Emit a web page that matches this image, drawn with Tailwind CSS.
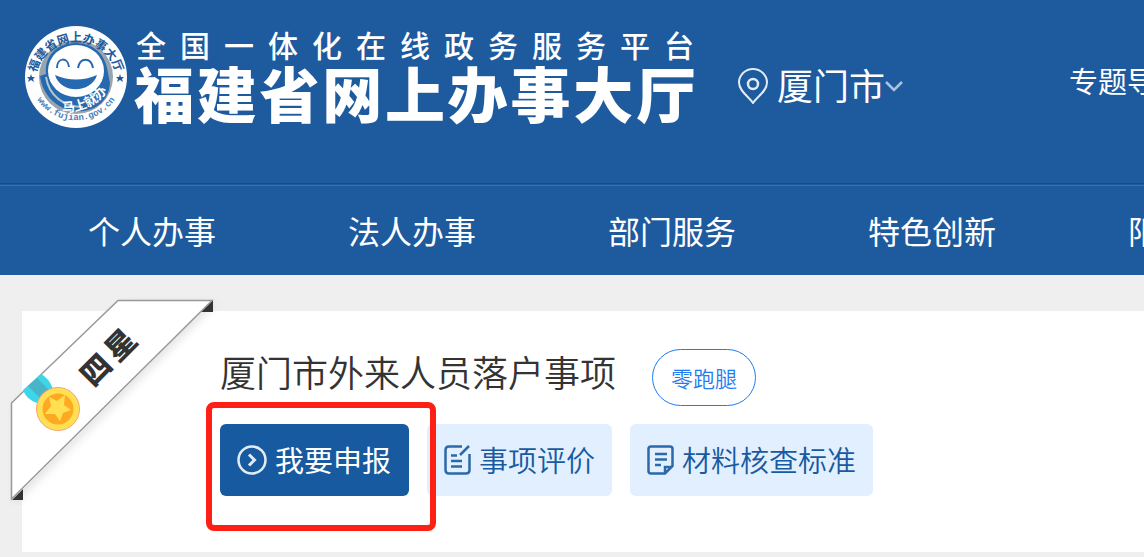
<!DOCTYPE html>
<html lang="zh-CN">
<head>
<meta charset="utf-8">
<meta name="viewport" content="width=device-width, initial-scale=1">
<title>福建省网上办事大厅</title>
<script src="https://cdn.jsdelivr.net/npm/@tailwindcss/browser@4"></script>
</head>
<body class="min-h-screen overflow-x-hidden bg-[#efefef] font-['Noto_Sans_CJK_SC','Liberation_Sans',sans-serif]">
<header class="overflow-hidden bg-[#1e5a9e] text-white">
  <div class="flex h-[183px] items-start pl-6">
    <a href="#" class="flex shrink-0 items-start gap-1.5 pt-6" aria-label="福建省网上办事大厅">
      <svg class="mt-px size-[104px]" viewBox="0 0 104 104">
        <defs>
          <path id="arcTop" d="M11 58A41 41 0 1 1 93 58"/>
          <path id="arcBottom" d="M6 58A47 47 0 0 0 98 58"/>
          <path id="arcInner" d="M38 87Q68 88 85 64"/>
        </defs>
        <circle cx="52" cy="52" r="51" fill="#fff"/>
        <circle cx="52" cy="52" r="37" fill="#98a5ae"/>
        <path d="M16 51C19 73 37 88 59 86C75 84 85 73 86 58L84 48C82 30 70 18 52 18C30 18 20 34 22 49Z" fill="#2569b0"/>
        <path d="M22 52C25 71 40 82 59 82" fill="none" stroke="#b6c4ce" stroke-width="2"/>
        <ellipse cx="52" cy="46" rx="28" ry="26" fill="#fff"/>
        <path d="M33 43C33 32 44 32 45 42M54 43C56 32 67 32 69 43" fill="none" stroke="#2569b0" stroke-width="2"/>
        <path d="M31 50Q52 59 73 50C68 68 37 70 31 50Z" fill="#2569b0"/>
        <path d="M7 49l1 3h3l-2 2 1 3-3-2-3 2 1-3-2-2h3zM96 49l1 3h3l-2 2 1 3-3-2-3 2 1-3-2-2h3z" fill="#1e5a9e"/>
        <text fill="#1e5a9e" font-size="12" font-weight="700"><textPath href="#arcTop" startOffset="50%" text-anchor="middle">福建省网上办事大厅</textPath></text>
        <text fill="#4a7db5" font-size="9" font-weight="700" font-family="Liberation Mono"><textPath href="#arcBottom" startOffset="50%" text-anchor="middle">www.fujian.gov.cn</textPath></text>
        <text fill="#fff" font-size="13" font-weight="700"><textPath href="#arcInner">马上就办</textPath></text>
      </svg>
      <span class="flex w-[562px] flex-col">
        <span class="h-9 px-0.5 text-[30px] leading-10 font-medium whitespace-nowrap [text-align-last:justify]">全国一体化在线政务服务平台</span>
        <span class="h-16 text-[60px] leading-16 font-black whitespace-nowrap [text-align-last:justify]">福建省网上办事大厅</span>
      </span>
    </a>
    <button type="button" class="ml-[41px] flex shrink-0 items-center pt-[58px] text-4xl leading-[52px]">
      <svg class="mt-1 mr-2 h-9 w-8" viewBox="0 0 32 36" fill="none" stroke="#e2ebf5" stroke-width="2"><path d="M16 35C12 29 2 23 2 14.500A14 13.500 0 0 1 30 14.500C30 23 20 29 16 35Z"/><circle cx="16" cy="16" r="5" stroke-width="2.500"/></svg>
      厦门市
      <svg class="mt-1 h-3 w-[18px]" viewBox="0 0 18 12" fill="none" stroke="#aac4e0" stroke-width="2.500"><path d="M1 2l8 8 8-8"/></svg>
    </button>
    <a href="#" class="ml-auto w-[75px] shrink-0 pt-[58px] text-[29px] leading-11 whitespace-nowrap">专题导航</a>
  </div>
  <div class="h-[3px] border-t border-b border-t-[#174a82] border-b-[#2c70bf]"></div>
  <nav class="flex h-[89px] items-center pb-0.5 pl-[22px] text-center text-[32px] whitespace-nowrap">
    <a href="#" class="w-[260px] shrink-0">个人办事</a>
    <a href="#" class="w-[260px] shrink-0">法人办事</a>
    <a href="#" class="w-[260px] shrink-0">部门服务</a>
    <a href="#" class="w-[260px] shrink-0">特色创新</a>
    <a href="#" class="w-[260px] shrink-0">阳光政务</a>
  </nav>
</header>
<main class="pt-9 pl-[22px]">
  <section class="relative bg-white pt-[38px] pb-14 pl-[198px]">
    <svg class="absolute -top-4 -left-4 h-[210px] w-[216px]" viewBox="0 0 216 210">
      <defs><filter id="shade" x="-20%" y="-20%" width="140%" height="140%"><feDropShadow dx="3" dy="4" stdDeviation="4" flood-opacity=".1"/></filter></defs>
      <path d="M112 5H207L6 205V108Z" fill="#fff" filter="url(#shade)"/>
      <path d="M207 5V17H195ZM17 194V205H6Z" fill="#333"/>
      <path d="M112 5.500H206L5.500 204V108Z" fill="#fff" stroke="#999" stroke-width="1.500"/>
      <path d="M17 95L35 79Q43 83 47 94L31 108Q20 104 17 95Z" fill="#3dd5e8"/><path d="M22 91L31 83L43 95L34 103Z" fill="#49b4c8"/>
      <circle cx="52" cy="114" r="21.500" fill="#ffe052" stroke="#f6a66f" stroke-width="1"/>
      <circle cx="52" cy="114" r="15.500" fill="#ffa923"/>
      <path d="M43 102L51 106L59 100L58 110L65 115L57 118L54 126L49 119L39 119L45 111Z" fill="#ffe052"/>
      <text x="0 35" transform="translate(87 93) rotate(-45)" font-size="30" font-weight="900" fill="#333">四星</text>
    </svg>
    <div class="flex items-center gap-9">
      <h1 class="pb-3 text-4xl leading-[45px] font-[350] whitespace-nowrap text-[#333]">厦门市外来人员落户事项</h1>
      <span class="flex h-[57px] shrink-0 items-center rounded-full border border-[#1e7df2] px-[18px] text-[22px] font-[350] text-[#1e7df2]">零跑腿</span>
    </div>
    <div class="mt-[18px] flex gap-[18px] text-[29px] whitespace-nowrap">
      <div class="relative">
        <button type="button" class="flex h-[72px] items-center gap-2 rounded-md bg-[#185a9f] pr-[18px] pl-[17px] text-white">
          <svg class="size-[30px]" viewBox="0 0 30 30" fill="none" stroke="#e3ebf4" stroke-width="2.500"><circle cx="15" cy="15" r="13.500"/><path d="M12 9.500l5.500 5.500-5.500 5.500" stroke-width="3"/></svg>
          我要申报
        </button>
        <span class="pointer-events-none absolute -top-[22px] -right-[27px] -bottom-[35px] -left-[14px] z-10 rounded-lg border-6 border-[#ff2015]"></span>
      </div>
      <button type="button" class="flex h-[72px] items-center gap-2 rounded-md bg-[#e2efff] px-[17px] font-[350] text-[#185a9f]">
        <svg class="h-[30px] w-[27px]" viewBox="0 0 27 30" fill="none" stroke="#2c69a8" stroke-width="2.500"><path d="M18 1.500H5Q1.500 1.500 1.500 5V25Q1.500 28.500 5 28.500H22Q25.500 28.500 25.500 25V9"/><path d="M16 10L25 1M7 10.500h6M7 16h11M7 21.500h11" /></svg>
        事项评价
      </button>
      <button type="button" class="flex h-[72px] items-center gap-2 rounded-md bg-[#e2efff] px-[17px] font-[350] text-[#185a9f]">
        <svg class="h-[30px] w-[27px]" viewBox="0 0 27 30" fill="none" stroke="#2c69a8" stroke-width="2.500"><path d="M16 28.500H4Q1.500 28.500 1.500 26V4Q1.500 1.500 4 1.500H23Q25.500 1.500 25.500 4V21L18 28.500H16M18 28V22H25"/><path d="M8 9h12M8 14.500h12M8 20h6"/></svg>
        材料核查标准
      </button>
    </div>
  </section>
</main>
</body>
</html>
